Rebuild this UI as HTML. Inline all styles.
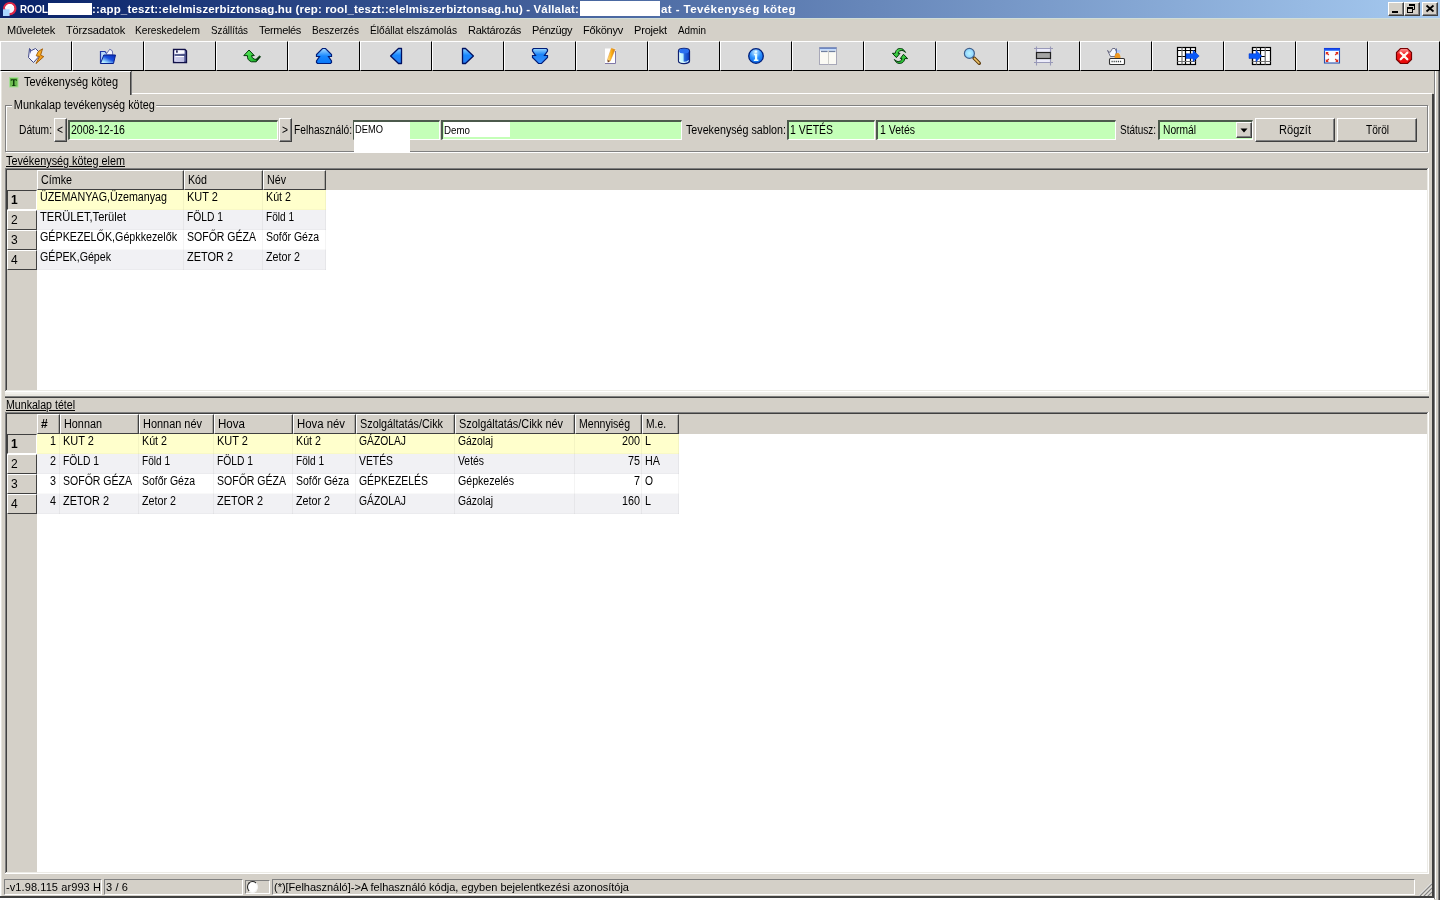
<!DOCTYPE html>
<html><head><meta charset="utf-8"><title>ROOL</title>
<style>
*{box-sizing:border-box;margin:0;padding:0}
html,body{width:1440px;height:900px;overflow:hidden;background:#d4d0c8;font-family:"Liberation Sans",sans-serif;font-size:11px;color:#000}
.a{position:absolute}
.t{position:absolute;white-space:nowrap;line-height:13px;font-size:12px}
#tx{position:absolute;left:0;top:0;width:1440px;height:900px;will-change:transform}
.tb{top:41px;height:30px;width:72px;background:#dadada;border-top:1px solid #fff;border-left:1px solid #fff;border-right:1px solid #000;border-bottom:1px solid #000}
.wb{background:#d4d0c8;border-top:1px solid #fff;border-left:1px solid #fff;border-right:1px solid #404040;border-bottom:1px solid #404040;box-shadow:inset -1px -1px 0 #808080}
.pb{background:#d4d0c8;border-top:1px solid #fff;border-left:1px solid #fff;border-right:1px solid #404040;border-bottom:1px solid #404040;box-shadow:inset -1px -1px 0 #808080}
.cbb{background:#d4d0c8;border-top:1px solid #fff;border-left:1px solid #fff;border-right:1px solid #404040;border-bottom:1px solid #404040;box-shadow:inset -1px -1px 0 #808080}
.inp{border-top:2px solid #404040;border-left:2px solid #404040;border-bottom:1px solid #fff;border-right:1px solid #fff;border-top-color:#4c5a4c;border-left-color:#4c5a4c}
.hdr{background:#d4d0c8;border-top:1px solid #fff;border-left:1px solid #fff;border-right:1px solid #404040;border-bottom:1px solid #404040;box-shadow:inset -1px 0 0 #a8a6a0}
.rh{background:#d4d0c8;border-top:1px solid #fff;border-left:1px solid #fff;border-right:1px solid #404040;border-bottom:1px solid #404040}
</style></head><body>
<div class="a" style="left:0px;top:0px;width:1440px;height:18px;background:linear-gradient(90deg,#0a246a 0%,#0a246a 2%,#a6caf0 100%);"></div>
<div class="a" style="left:0px;top:18px;width:1440px;height:1px;background:#d2ddd8;"></div>
<div class="a" style="left:0px;top:19px;width:1440px;height:1px;background:#d0d2c4;"></div>
<div class="a" style="left:48px;top:3px;width:44px;height:12px;background:#fff;"></div>
<div class="a" style="left:580px;top:1px;width:80px;height:15px;background:#fff;"></div>
<div class="a wb" style="left:1388px;top:2px;width:16px;height:14px"></div>
<div class="a wb" style="left:1404px;top:2px;width:16px;height:14px"></div>
<div class="a wb" style="left:1422px;top:2px;width:16px;height:14px"></div>
<div class="a tb" style="left:0px"></div>
<div class="a tb" style="left:72px"></div>
<div class="a tb" style="left:144px"></div>
<div class="a tb" style="left:216px"></div>
<div class="a tb" style="left:288px"></div>
<div class="a tb" style="left:360px"></div>
<div class="a tb" style="left:432px"></div>
<div class="a tb" style="left:504px"></div>
<div class="a tb" style="left:576px"></div>
<div class="a tb" style="left:648px"></div>
<div class="a tb" style="left:720px"></div>
<div class="a tb" style="left:792px"></div>
<div class="a tb" style="left:864px"></div>
<div class="a tb" style="left:936px"></div>
<div class="a tb" style="left:1008px"></div>
<div class="a tb" style="left:1080px"></div>
<div class="a tb" style="left:1152px"></div>
<div class="a tb" style="left:1224px"></div>
<div class="a tb" style="left:1296px"></div>
<div class="a tb" style="left:1368px"></div>
<div class="a" style="left:0px;top:71px;width:132px;height:24px;background:#d4d0c8;border-top:1px solid #fff;border-left:1px solid #fff;border-right:2px solid #404040"></div>
<div class="a" style="left:131px;top:72px;width:1px;height:23px;background:#808080;"></div>
<div class="a" style="left:132px;top:93px;width:1300px;height:1px;background:#fff;"></div>
<div class="a" style="left:1434px;top:71px;width:1px;height:828px;background:#808080;"></div>
<div class="a" style="left:1435px;top:71px;width:1px;height:828px;background:#fff;"></div>
<div class="a" style="left:1438px;top:71px;width:1px;height:829px;background:#808080;"></div>
<div class="a" style="left:1439px;top:71px;width:1px;height:829px;background:#404040;"></div>
<div class="a" style="left:1432px;top:94px;width:2px;height:804px;background:#404040;"></div>
<div class="a" style="left:0px;top:71px;width:1px;height:827px;background:#fff;"></div>
<div class="a" style="left:1px;top:72px;width:1px;height:826px;background:#e6e4de;"></div>
<div class="a" style="left:0px;top:896px;width:1434px;height:2px;background:#404040;"></div>
<div class="a" style="left:0px;top:898px;width:1434px;height:2px;background:#fff;"></div>
<div class="a" style="left:5px;top:105px;width:1423px;height:47px;border:1px solid #808080;box-shadow:inset 1px 1px 0 #fff,1px 1px 0 #fff"></div>
<div class="a pb" style="left:54px;top:118px;width:13px;height:24px"></div>
<div class="a pb" style="left:279px;top:118px;width:13px;height:24px"></div>
<div class="a inp" style="left:68px;top:120px;width:210px;height:20px;background:#c4ffb8"></div>
<div class="a inp" style="left:353px;top:120px;width:87px;height:20px;background:#c4ffb8"></div>
<div class="a inp" style="left:441px;top:120px;width:241px;height:20px;background:#c4ffb8"></div>
<div class="a inp" style="left:787px;top:120px;width:88px;height:20px;background:#c4ffb8"></div>
<div class="a inp" style="left:876px;top:120px;width:240px;height:20px;background:#c4ffb8"></div>
<div class="a inp" style="left:1158px;top:120px;width:95px;height:20px;background:#c4ffb8"></div>
<div class="a" style="left:354px;top:122px;width:56px;height:30px;background:#fff;"></div>
<div class="a" style="left:444px;top:122px;width:66px;height:15px;background:#fff;"></div>
<div class="a pb" style="left:1255px;top:118px;width:80px;height:24px"></div>
<div class="a pb" style="left:1337px;top:118px;width:80px;height:24px"></div>
<div class="a cbb" style="left:1236px;top:122px;width:16px;height:16px"></div>
<div class="a" style="left:5px;top:168px;width:1424px;height:224px;background:#fff;"></div>
<div class="a" style="left:5px;top:168px;width:1424px;height:1px;background:#808080;"></div>
<div class="a" style="left:5px;top:168px;width:1px;height:224px;background:#808080;"></div>
<div class="a" style="left:6px;top:169px;width:1422px;height:1px;background:#404040;"></div>
<div class="a" style="left:6px;top:169px;width:1px;height:222px;background:#404040;"></div>
<div class="a" style="left:6px;top:390px;width:1422px;height:1px;background:#ecebe6;"></div>
<div class="a" style="left:1427px;top:169px;width:1px;height:222px;background:#ecebe6;"></div>
<div class="a" style="left:5px;top:391px;width:1424px;height:1px;background:#fff;"></div>
<div class="a" style="left:1428px;top:168px;width:1px;height:224px;background:#fff;"></div>
<div class="a" style="left:7px;top:170px;width:1420px;height:20px;background:#d4d0c8;"></div>
<div class="a" style="left:7px;top:190px;width:30px;height:200px;background:#d4d0c8;"></div>
<div class="a hdr" style="left:37px;top:170px;width:147px;height:20px"></div>
<div class="a hdr" style="left:184px;top:170px;width:79px;height:20px"></div>
<div class="a hdr" style="left:263px;top:170px;width:63px;height:20px"></div>
<div class="a" style="left:37px;top:190px;width:289px;height:20px;background:#ffffcc;"></div>
<div class="a" style="left:7px;top:190px;width:30px;height:20px;border-top:1px solid #404040;border-left:1px solid #404040;border-bottom:1px solid #fff;border-right:1px solid #fff"></div>
<div class="a" style="left:183px;top:190px;width:1px;height:20px;background:rgba(0,0,0,0.045);"></div>
<div class="a" style="left:262px;top:190px;width:1px;height:20px;background:rgba(0,0,0,0.045);"></div>
<div class="a" style="left:325px;top:190px;width:1px;height:20px;background:rgba(0,0,0,0.045);"></div>
<div class="a" style="left:37px;top:209px;width:289px;height:1px;background:rgba(0,0,0,0.025);"></div>
<div class="a" style="left:37px;top:210px;width:289px;height:20px;background:#f1f1f4;"></div>
<div class="a rh" style="left:7px;top:210px;width:30px;height:20px"></div>
<div class="a" style="left:183px;top:210px;width:1px;height:20px;background:rgba(0,0,0,0.045);"></div>
<div class="a" style="left:262px;top:210px;width:1px;height:20px;background:rgba(0,0,0,0.045);"></div>
<div class="a" style="left:325px;top:210px;width:1px;height:20px;background:rgba(0,0,0,0.045);"></div>
<div class="a" style="left:37px;top:229px;width:289px;height:1px;background:rgba(0,0,0,0.025);"></div>
<div class="a" style="left:37px;top:230px;width:289px;height:20px;background:#fff;"></div>
<div class="a rh" style="left:7px;top:230px;width:30px;height:20px"></div>
<div class="a" style="left:183px;top:230px;width:1px;height:20px;background:rgba(0,0,0,0.045);"></div>
<div class="a" style="left:262px;top:230px;width:1px;height:20px;background:rgba(0,0,0,0.045);"></div>
<div class="a" style="left:325px;top:230px;width:1px;height:20px;background:rgba(0,0,0,0.045);"></div>
<div class="a" style="left:37px;top:249px;width:289px;height:1px;background:rgba(0,0,0,0.025);"></div>
<div class="a" style="left:37px;top:250px;width:289px;height:20px;background:#f1f1f4;"></div>
<div class="a rh" style="left:7px;top:250px;width:30px;height:20px"></div>
<div class="a" style="left:183px;top:250px;width:1px;height:20px;background:rgba(0,0,0,0.045);"></div>
<div class="a" style="left:262px;top:250px;width:1px;height:20px;background:rgba(0,0,0,0.045);"></div>
<div class="a" style="left:325px;top:250px;width:1px;height:20px;background:rgba(0,0,0,0.045);"></div>
<div class="a" style="left:37px;top:269px;width:289px;height:1px;background:rgba(0,0,0,0.025);"></div>
<div class="a" style="left:5px;top:412px;width:1424px;height:462px;background:#fff;"></div>
<div class="a" style="left:5px;top:412px;width:1424px;height:1px;background:#808080;"></div>
<div class="a" style="left:5px;top:412px;width:1px;height:462px;background:#808080;"></div>
<div class="a" style="left:6px;top:413px;width:1422px;height:1px;background:#404040;"></div>
<div class="a" style="left:6px;top:413px;width:1px;height:460px;background:#404040;"></div>
<div class="a" style="left:6px;top:872px;width:1422px;height:1px;background:#ecebe6;"></div>
<div class="a" style="left:1427px;top:413px;width:1px;height:460px;background:#ecebe6;"></div>
<div class="a" style="left:5px;top:873px;width:1424px;height:1px;background:#fff;"></div>
<div class="a" style="left:1428px;top:412px;width:1px;height:462px;background:#fff;"></div>
<div class="a" style="left:7px;top:414px;width:1420px;height:20px;background:#d4d0c8;"></div>
<div class="a" style="left:7px;top:434px;width:30px;height:438px;background:#d4d0c8;"></div>
<div class="a hdr" style="left:37px;top:414px;width:23px;height:20px"></div>
<div class="a hdr" style="left:60px;top:414px;width:79px;height:20px"></div>
<div class="a hdr" style="left:139px;top:414px;width:75px;height:20px"></div>
<div class="a hdr" style="left:214px;top:414px;width:79px;height:20px"></div>
<div class="a hdr" style="left:293px;top:414px;width:63px;height:20px"></div>
<div class="a hdr" style="left:356px;top:414px;width:99px;height:20px"></div>
<div class="a hdr" style="left:455px;top:414px;width:120px;height:20px"></div>
<div class="a hdr" style="left:575px;top:414px;width:67px;height:20px"></div>
<div class="a hdr" style="left:642px;top:414px;width:37px;height:20px"></div>
<div class="a" style="left:37px;top:434px;width:642px;height:20px;background:#ffffcc;"></div>
<div class="a" style="left:7px;top:434px;width:30px;height:20px;border-top:1px solid #404040;border-left:1px solid #404040;border-bottom:1px solid #fff;border-right:1px solid #fff"></div>
<div class="a" style="left:59px;top:434px;width:1px;height:20px;background:rgba(0,0,0,0.045);"></div>
<div class="a" style="left:138px;top:434px;width:1px;height:20px;background:rgba(0,0,0,0.045);"></div>
<div class="a" style="left:213px;top:434px;width:1px;height:20px;background:rgba(0,0,0,0.045);"></div>
<div class="a" style="left:292px;top:434px;width:1px;height:20px;background:rgba(0,0,0,0.045);"></div>
<div class="a" style="left:355px;top:434px;width:1px;height:20px;background:rgba(0,0,0,0.045);"></div>
<div class="a" style="left:454px;top:434px;width:1px;height:20px;background:rgba(0,0,0,0.045);"></div>
<div class="a" style="left:574px;top:434px;width:1px;height:20px;background:rgba(0,0,0,0.045);"></div>
<div class="a" style="left:641px;top:434px;width:1px;height:20px;background:rgba(0,0,0,0.045);"></div>
<div class="a" style="left:678px;top:434px;width:1px;height:20px;background:rgba(0,0,0,0.045);"></div>
<div class="a" style="left:37px;top:453px;width:642px;height:1px;background:rgba(0,0,0,0.025);"></div>
<div class="a" style="left:37px;top:454px;width:642px;height:20px;background:#f1f1f4;"></div>
<div class="a rh" style="left:7px;top:454px;width:30px;height:20px"></div>
<div class="a" style="left:59px;top:454px;width:1px;height:20px;background:rgba(0,0,0,0.045);"></div>
<div class="a" style="left:138px;top:454px;width:1px;height:20px;background:rgba(0,0,0,0.045);"></div>
<div class="a" style="left:213px;top:454px;width:1px;height:20px;background:rgba(0,0,0,0.045);"></div>
<div class="a" style="left:292px;top:454px;width:1px;height:20px;background:rgba(0,0,0,0.045);"></div>
<div class="a" style="left:355px;top:454px;width:1px;height:20px;background:rgba(0,0,0,0.045);"></div>
<div class="a" style="left:454px;top:454px;width:1px;height:20px;background:rgba(0,0,0,0.045);"></div>
<div class="a" style="left:574px;top:454px;width:1px;height:20px;background:rgba(0,0,0,0.045);"></div>
<div class="a" style="left:641px;top:454px;width:1px;height:20px;background:rgba(0,0,0,0.045);"></div>
<div class="a" style="left:678px;top:454px;width:1px;height:20px;background:rgba(0,0,0,0.045);"></div>
<div class="a" style="left:37px;top:473px;width:642px;height:1px;background:rgba(0,0,0,0.025);"></div>
<div class="a" style="left:37px;top:474px;width:642px;height:20px;background:#fff;"></div>
<div class="a rh" style="left:7px;top:474px;width:30px;height:20px"></div>
<div class="a" style="left:59px;top:474px;width:1px;height:20px;background:rgba(0,0,0,0.045);"></div>
<div class="a" style="left:138px;top:474px;width:1px;height:20px;background:rgba(0,0,0,0.045);"></div>
<div class="a" style="left:213px;top:474px;width:1px;height:20px;background:rgba(0,0,0,0.045);"></div>
<div class="a" style="left:292px;top:474px;width:1px;height:20px;background:rgba(0,0,0,0.045);"></div>
<div class="a" style="left:355px;top:474px;width:1px;height:20px;background:rgba(0,0,0,0.045);"></div>
<div class="a" style="left:454px;top:474px;width:1px;height:20px;background:rgba(0,0,0,0.045);"></div>
<div class="a" style="left:574px;top:474px;width:1px;height:20px;background:rgba(0,0,0,0.045);"></div>
<div class="a" style="left:641px;top:474px;width:1px;height:20px;background:rgba(0,0,0,0.045);"></div>
<div class="a" style="left:678px;top:474px;width:1px;height:20px;background:rgba(0,0,0,0.045);"></div>
<div class="a" style="left:37px;top:493px;width:642px;height:1px;background:rgba(0,0,0,0.025);"></div>
<div class="a" style="left:37px;top:494px;width:642px;height:20px;background:#f1f1f4;"></div>
<div class="a rh" style="left:7px;top:494px;width:30px;height:20px"></div>
<div class="a" style="left:59px;top:494px;width:1px;height:20px;background:rgba(0,0,0,0.045);"></div>
<div class="a" style="left:138px;top:494px;width:1px;height:20px;background:rgba(0,0,0,0.045);"></div>
<div class="a" style="left:213px;top:494px;width:1px;height:20px;background:rgba(0,0,0,0.045);"></div>
<div class="a" style="left:292px;top:494px;width:1px;height:20px;background:rgba(0,0,0,0.045);"></div>
<div class="a" style="left:355px;top:494px;width:1px;height:20px;background:rgba(0,0,0,0.045);"></div>
<div class="a" style="left:454px;top:494px;width:1px;height:20px;background:rgba(0,0,0,0.045);"></div>
<div class="a" style="left:574px;top:494px;width:1px;height:20px;background:rgba(0,0,0,0.045);"></div>
<div class="a" style="left:641px;top:494px;width:1px;height:20px;background:rgba(0,0,0,0.045);"></div>
<div class="a" style="left:678px;top:494px;width:1px;height:20px;background:rgba(0,0,0,0.045);"></div>
<div class="a" style="left:37px;top:513px;width:642px;height:1px;background:rgba(0,0,0,0.025);"></div>
<div class="a" style="left:5px;top:392px;width:1424px;height:2px;background:#f2f1ed;"></div>
<div class="a" style="left:5px;top:394px;width:1424px;height:2px;background:#eae8e2;"></div>
<div class="a" style="left:5px;top:396px;width:1424px;height:1px;background:#808080;"></div>
<div class="a" style="left:5px;top:397px;width:1424px;height:1px;background:#404040;"></div>
<div class="a" style="left:4px;top:879px;width:98px;height:16px;border-top:1px solid #808080;border-left:1px solid #808080;border-bottom:1px solid #fff;border-right:1px solid #fff"></div>
<div class="a" style="left:104px;top:879px;width:139px;height:16px;border-top:1px solid #808080;border-left:1px solid #808080;border-bottom:1px solid #fff;border-right:1px solid #fff"></div>
<div class="a" style="left:272px;top:879px;width:1143px;height:16px;border-top:1px solid #808080;border-left:1px solid #808080;border-bottom:1px solid #fff;border-right:1px solid #fff"></div>
<div class="a" style="left:245px;top:880px;width:25px;height:14px;border-top:1px solid #808080;border-left:1px solid #808080;border-bottom:1px solid #fff;border-right:1px solid #fff"></div>
<div class="a" style="left:247px;top:881px;width:11px;height:12px;border-radius:50%;background:#fff;border:1.5px solid #202020;border-right-color:#f4f4f4;border-bottom-color:#f4f4f4;transform:rotate(0deg)"></div>
<svg class="a" style="left:1419px;top:883px" width="13" height="13" viewBox="0 0 13 13"><g stroke-width="1"><path d="M0.5 13L13 0.5M4.5 13L13 4.5M8.5 13L13 8.5" stroke="#808080" stroke-width="1.6"/><path d="M-0.5 13L13 -0.5M3.5 13L13 3.5M7.5 13L13 7.5" stroke="#fff"/></g></svg>
<svg class="a" style="left:0;top:0" width="1440" height="72" viewBox="0 0 1440 72">
<defs>
<linearGradient id="gb" x1="0" y1="0" x2="0" y2="1"><stop offset="0" stop-color="#8fd0ff"/><stop offset=".45" stop-color="#1888ff"/><stop offset="1" stop-color="#2a7cf0"/></linearGradient>
<linearGradient id="gb2" x1="0" y1="0" x2="0" y2="1"><stop offset="0" stop-color="#a8dcff"/><stop offset=".5" stop-color="#1888ff"/><stop offset="1" stop-color="#0a78f8"/></linearGradient>
<linearGradient id="gbd" x1="0" y1="0" x2="0" y2="1"><stop offset="0" stop-color="#9cd8ff"/><stop offset=".4" stop-color="#1a84f8"/><stop offset="1" stop-color="#3a90ff"/></linearGradient>
<linearGradient id="gfold" x1="1" y1="0" x2="0.1" y2="1"><stop offset="0" stop-color="#0828b8"/><stop offset=".45" stop-color="#1850e0"/><stop offset=".8" stop-color="#a0e0ff"/><stop offset="1" stop-color="#e0ffff"/></linearGradient>
<linearGradient id="gfl" x1="0" y1="0" x2="1" y2="0"><stop offset="0" stop-color="#e8e8ff"/><stop offset=".5" stop-color="#c0c4e8"/><stop offset="1" stop-color="#4a5090"/></linearGradient>
<linearGradient id="gcyl" x1="0" y1="0" x2="1" y2="0"><stop offset="0" stop-color="#e8ffff"/><stop offset=".4" stop-color="#b8f0ff"/><stop offset=".55" stop-color="#2868d8"/><stop offset="1" stop-color="#0838c0"/></linearGradient>
<radialGradient id="ginfo" cx=".45" cy=".25" r=".8"><stop offset="0" stop-color="#c8ecff"/><stop offset=".5" stop-color="#2a90ff"/><stop offset="1" stop-color="#0860e0"/></radialGradient>
<linearGradient id="gred" x1="0" y1="0" x2="0" y2="1"><stop offset="0" stop-color="#ff9a9a"/><stop offset=".4" stop-color="#f01818"/><stop offset="1" stop-color="#e80808"/></linearGradient>
<linearGradient id="ggr" x1="0" y1="0" x2="1" y2="1"><stop offset="0" stop-color="#60f060"/><stop offset="1" stop-color="#10a820"/></linearGradient>
<linearGradient id="gpen" x1="0" y1="0" x2="1" y2="0"><stop offset="0" stop-color="#ffe8a0"/><stop offset=".5" stop-color="#ffb010"/><stop offset="1" stop-color="#c87820"/></linearGradient>
<linearGradient id="gbolt" x1="0" y1="0" x2="1" y2="1"><stop offset="0" stop-color="#ffc838"/><stop offset="1" stop-color="#e88008"/></linearGradient>
<radialGradient id="glens" cx=".5" cy=".5" r=".6"><stop offset="0" stop-color="#b8f4ff"/><stop offset="1" stop-color="#80c8ff"/></radialGradient>
<linearGradient id="gwin" x1="0" y1="0" x2="0" y2="1"><stop offset="0" stop-color="#0a30d8"/><stop offset="1" stop-color="#2a70ff"/></linearGradient>
</defs>
<!-- title icon -->
<circle cx="9.8" cy="8.6" r="5.6" fill="#f4f8ff" stroke="#e02848" stroke-width="2.2"/>
<rect x="3" y="9.3" width="6.6" height="6.7" fill="#a8d8ff"/>
<path d="M5.5 8.5a4.3 4.3 0 0 1 8 -1.5" fill="none" stroke="#fff" stroke-width="1.5"/>
<!-- 1 new/lightning -->
<path d="M29.5 48.5L31.5 50.5L35.5 48.5L38.5 51.5L38 57.5L33.5 62.5L28.5 57.5Z" fill="#f8f8ff" stroke="#404888" stroke-width="1"/>
<path d="M29.5 48.5L31.5 50.5L30 54Z" fill="#5058a0"/>
<path d="M42.5 48.8L38.3 51.5L36.2 55.8L39.6 56.4L36 63.6L43.8 56.6L40.6 55.2Z" fill="url(#gbolt)" stroke="#a05800" stroke-width=".9"/>
<!-- 2 open folder -->
<path d="M105.500 55L109.800 49.200L112.300 50.800L112.800 55Z" fill="#f4f4ff" stroke="#5058a0" stroke-width=".8"/>
<path d="M100.5 63.5V51.5H105L106.5 53.5" fill="#b8d8f8" stroke="#2038a8" stroke-width="1.2"/>
<path d="M100.500 63.500L103.800 55H115.500L113.500 63.500Z" fill="url(#gfold)" stroke="#08208c" stroke-width="1"/>
<!-- 3 floppy -->
<path d="M173.5 49.5H185L186.5 51V62.5H173.5Z" fill="url(#gfl)" stroke="#101048" stroke-width="1.3"/>
<rect x="175" y="50.3" width="9.5" height="3.4" fill="#fafaff"/>
<rect x="176" y="50.3" width="1.8" height="2.4" fill="#303060"/>
<rect x="174.5" y="54.2" width="11" height="1.6" fill="#40487c"/>
<rect x="175.5" y="56" width="8.5" height="1" fill="#fff"/>
<rect x="175.5" y="57" width="8.5" height="5" fill="#c8c8e8" opacity=".85"/>
<!-- 4 green undo arrow -->
<path d="M249 50L254.3 55.6H251.6C252 58 253.5 59.3 256 59.4L259.6 55.9L260.4 56.8L256.2 61.8H251.5C248.5 60.8 247.2 58.6 247.4 55.6H243.8Z" fill="url(#ggr)" stroke="#003808" stroke-width="1"/>
<path d="M256.300 60.400L260 56.600" stroke="#002004" stroke-width="1.100"/>
<!-- 5 double up -->
<path id="dbl" d="M322.5 48.5H325.5L331.5 54.5V56.5H328.5L331.5 61V62.5L330.5 63.5H317.5L316.5 62.5V61L319.5 56.5H316.5V54.5Z" fill="url(#gb2)" stroke="#001c78" stroke-width="1.2"/>
<!-- 6 left -->
<path d="M398.5 48.5H401.5V63.5H398.5L390.6 56Z" fill="url(#gb)" stroke="#001060" stroke-width="1.3" stroke-linejoin="round"/>
<!-- 7 right -->
<path d="M465.5 48.5H462.5V63.5H465.5L473.4 56Z" fill="url(#gb)" stroke="#001060" stroke-width="1.3" stroke-linejoin="round"/>
<!-- 8 double down -->
<path d="M538.5 63.5H541.5L547.5 57.5V55.5H544.5L547.5 51V49.5L546.5 48.5H533.5L532.5 49.5V51L535.5 55.5H532.5V57.5Z" fill="url(#gbd)" stroke="#001c78" stroke-width="1.2"/>
<!-- 9 edit -->
<rect x="605" y="48.5" width="10.5" height="15" fill="#fff"/>
<path d="M605 63.5H615.5V51" fill="none" stroke="#8078a8" stroke-width="1"/>
<path d="M611.3 48.3L615.2 49.4L610.2 61L607.4 60Z" fill="url(#gpen)" stroke="#d89030" stroke-width=".5"/>
<path d="M607.4 60L610.2 61L607.8 62.6Z" fill="#704018"/>
<!-- 10 cylinder -->
<path d="M678.5 51C678.5 47.6 689.5 47.6 689.5 51V61C689.5 64.4 678.5 64.4 678.5 61Z" fill="url(#gcyl)" stroke="#102070" stroke-width="1.2"/>
<ellipse cx="684" cy="51" rx="5" ry="2.5" fill="#2a70f0"/>
<path d="M679.3 60.5C681 63 687 63 688.7 60.5" fill="none" stroke="#e0ffff" stroke-width="1.3"/>
<!-- 11 info -->
<circle cx="756" cy="56" r="7.3" fill="url(#ginfo)" stroke="#00207c" stroke-width="1.3"/>
<path d="M754 53.8H757.2V59.6H758.4V61H753.8V59.6H755V55.2H754Z" fill="#e8ffff"/>
<circle cx="756" cy="51.6" r="1.2" fill="#e8f8ff"/>
<!-- 12 layout -->
<rect x="819.500" y="47.500" width="17" height="17" fill="#fbfaf4" stroke="#a8a8b8" stroke-width="1"/>
<rect x="819.500" y="47.300" width="17" height="1.700" fill="#7088c0"/>
<rect x="820" y="49" width="16" height="1.6" fill="#c4dcff"/>
<rect x="821" y="50.8" width="6.6" height="1.3" fill="#7080a0"/><rect x="829" y="50.800" width="6.400" height="1.300" fill="#7080a0"/>
<rect x="828" y="50.5" width=".9" height="14" fill="#c8c8c4"/>
<!-- 13 refresh -->
<path d="M905.6 52.4L903 49.2C899.5 47.6 896 48.6 895.2 53.3H892.4L896.4 57.6L900 53.3H898C898.4 51 900.4 50.2 903 50.6Z" fill="url(#ggr)" stroke="#003808" stroke-width="1"/>
<path d="M894.3 59.5L896.5 62.6C900 64.4 904 63.4 904.8 58.6H907.6L903.5 54.3L900.3 58.6H902C901.6 61 899.6 61.8 897 61.4Z" fill="url(#ggr)" stroke="#003808" stroke-width="1"/>
<!-- 14 magnifier -->
<path d="M974 58L979.3 63.3" stroke="#5a3808" stroke-width="3.4" stroke-linecap="round"/>
<path d="M974.4 58.4L979 63" stroke="#f0c468" stroke-width="1.5" stroke-linecap="round"/>
<circle cx="969.4" cy="53.4" r="5" fill="url(#glens)" stroke="#40608c" stroke-width="1.2"/>
<!-- 15 row -->
<rect x="1036.5" y="48.5" width="14" height="14" fill="#ececfa"/>
<path d="M1034 48.500H1053M1034 62.500H1053M1036.500 46.500V65.500M1050.500 46.500V65.500" stroke="#8c8cb0" stroke-width="1.100" fill="none" opacity=".85"/>
<rect x="1036.5" y="52.5" width="14" height="6" fill="#a4a4a4" stroke="#202020" stroke-width="1.2"/>
<!-- 16 password -->
<path d="M1107.5 50.5L1110 52.5L1112.5 48.5H1115L1116.5 52L1115 56.5H1110.5Z" fill="#f4f8ff" stroke="#50506c" stroke-width=".8"/>
<rect x="1117" y="50" width="3.4" height="2.6" fill="#b0c8f8"/>
<rect x="1116" y="48.5" width="1" height="6" fill="#6070a0"/>
<path d="M1114.5 58C1114.5 54.5 1116 53 1117.5 53C1119.500 53 1120.5 55 1120.5 58Z" fill="#f09820"/>
<rect x="1109.500" y="58.500" width="15" height="6" rx="1" fill="#fff" stroke="#303030" stroke-width="1.1"/>
<path d="M1111.5 61.5H1122" stroke="#404848" stroke-width="1.6" stroke-dasharray="1.2 .9"/>
<!-- 17 grid + arrow right -->
<g id="grd"><rect x="1177.500" y="47.500" width="18" height="17" fill="#fff" stroke="#000" stroke-width="1.2"/>
<path d="M1177.500 50.500H1195.500M1177.500 56.500H1186M1185.500 47.500V64.500M1190.500 47.500V64.500" stroke="#000" stroke-width="1.2" fill="none"/>
<path d="M1182 47.500V64.500M1177.500 61.500H1195.500" stroke="#707070" stroke-width="1.200" fill="none"/></g>
<path d="M1186 53.700H1193V50.300L1199.200 56L1193 61.700V58.500H1186Z" fill="#0858f8" stroke="#0030c0" stroke-width=".5"/>
<!-- 18 arrow + grid -->
<rect x="1252.500" y="47.500" width="18" height="17" fill="#fff" stroke="#000" stroke-width="1.2"/>
<path d="M1252.500 50.500H1270.500M1261 56.500H1265M1260.500 47.500V64.500M1252.500 47.500V64.500" stroke="#000" stroke-width="1.2" fill="none"/>
<path d="M1256.500 47.500V64.500M1265.200 47.500V64.500M1252.500 61.500H1270.500" stroke="#707070" stroke-width="1.2" fill="none"/>
<path d="M1249 53.700H1256V50.300L1261.700 56L1256 61.700V58.500H1249Z" fill="#0858f8" stroke="#0030c0" stroke-width=".5"/>
<!-- 19 fullscreen -->
<rect x="1324.500" y="48.500" width="15" height="14.500" fill="#fafcff" stroke="#2850b0" stroke-width="1.1"/>
<rect x="1324" y="48" width="16" height="2.800" fill="url(#gwin)"/>
<g fill="#e02818"><path d="M1325.800 52H1328.800L1325.800 55Z"/><path d="M1338.200 52H1335.200L1338.200 55Z"/><path d="M1325.800 62H1328.800L1325.800 59Z"/><path d="M1338.200 62H1335.200L1338.200 59Z"/>
<path d="M1326.500 52.700L1328.800 55M1337.500 52.700L1335.200 55M1326.500 61.300L1328.800 59M1337.500 61.300L1335.200 59" stroke="#e03020" stroke-width="1.300"/></g>
<!-- 20 stop -->
<path d="M1400.500 48.500H1407.500L1411.500 52.500V59.500L1407.500 63.500H1400.500L1396.500 59.500V52.500Z" fill="url(#gred)" stroke="#780000" stroke-width="1.200"/>
<path d="M1400.700 52.700L1407.300 59.300M1407.300 52.700L1400.700 59.300" stroke="#fff8f0" stroke-width="2.300" stroke-linecap="round"/>
<!-- window button glyphs -->
<rect x="1392" y="11" width="6" height="2" fill="#000"/>
<path d="M1409.500 5h5v4.500h-1.500M1409.500 5.500h5" stroke="#000" stroke-width="1" fill="none"/><rect x="1409" y="4" width="6" height="2" fill="#000"/>
<rect x="1407.500" y="8.500" width="5" height="4" fill="none" stroke="#000"/><rect x="1407" y="7" width="6" height="2" fill="#000"/>
<path d="M1426.500 5.500L1433.500 11.500M1433.500 5.500L1426.500 11.500" stroke="#000" stroke-width="1.800"/>
<!-- combobox arrow -->
</svg>
<svg class="a" style="left:1240px;top:128px" width="8" height="5" viewBox="0 0 8 5"><path d="M0.500 0.500H7.500L4 4.500Z" fill="#000"/></svg>
<svg class="a" style="left:9px;top:77px" width="10" height="11" viewBox="0 0 10 11"><rect width="9.500" height="10.500" fill="#a8dc98"/><rect x="1" y="1" width="7.500" height="8.500" fill="#6cbc50"/><path d="M1.800 2.200H7.700V4H7V3.200H5.500V8.300H6.500V9H3V8.300H4V3.200H2.500V4H1.800Z" fill="#0c3c08"/></svg>

<div id="tx">
<div class="t" style="left:20px;top:3px;transform:scaleX(0.8425);transform-origin:0 0;color:#fff;font-weight:bold;font-size:11.5px">ROOL</div>
<div class="t" style="left:92px;top:3px;letter-spacing:0.152px;color:#fff;font-weight:bold;font-size:11.5px">::app_teszt::elelmiszerbiztonsag.hu (rep: rool_teszt::elelmiszerbiztonsag.hu) - Vállalat:</div>
<div class="t" style="left:661px;top:3px;letter-spacing:0.423px;color:#fff;font-weight:bold;font-size:11.5px">at - Tevékenység köteg</div>
<div class="t" style="left:7px;top:24px;letter-spacing:-0.238px;font-size:11px">Műveletek</div>
<div class="t" style="left:66px;top:24px;letter-spacing:-0.139px;font-size:11px">Törzsadatok</div>
<div class="t" style="left:135px;top:24px;transform:scaleX(0.9242);transform-origin:0 0;font-size:11px">Kereskedelem</div>
<div class="t" style="left:211px;top:24px;transform:scaleX(0.8899);transform-origin:0 0;font-size:11px">Szállítás</div>
<div class="t" style="left:259px;top:24px;letter-spacing:-0.328px;font-size:11px">Termelés</div>
<div class="t" style="left:312px;top:24px;transform:scaleX(0.9151);transform-origin:0 0;font-size:11px">Beszerzés</div>
<div class="t" style="left:370px;top:24px;transform:scaleX(0.9240);transform-origin:0 0;font-size:11px">Élőállat elszámolás</div>
<div class="t" style="left:468px;top:24px;letter-spacing:-0.264px;font-size:11px">Raktározás</div>
<div class="t" style="left:532px;top:24px;letter-spacing:-0.402px;font-size:11px">Pénzügy</div>
<div class="t" style="left:583px;top:24px;letter-spacing:-0.225px;font-size:11px">Főkönyv</div>
<div class="t" style="left:634px;top:24px;letter-spacing:-0.179px;font-size:11px">Projekt</div>
<div class="t" style="left:678px;top:24px;transform:scaleX(0.8978);transform-origin:0 0;font-size:11px">Admin</div>
<div class="t" style="left:24px;top:76px;transform:scaleX(0.9150);transform-origin:0 0;">Tevékenység köteg</div>
<div class="t" style="left:14px;top:99px;transform:scaleX(0.9071);transform-origin:0 0;background:#d4d0c8;padding:0 2px;margin-left:-2px">Munkalap tevékenység köteg</div>
<div class="t" style="left:19px;top:124px;transform:scaleX(0.8530);transform-origin:0 0;">Dátum:</div>
<div class="t" style="left:71px;top:124px;transform:scaleX(0.8796);transform-origin:0 0;">2008-12-16</div>
<div class="t" style="left:294px;top:124px;transform:scaleX(0.8524);transform-origin:0 0;">Felhasználó:</div>
<div class="t" style="left:355px;top:123px;transform:scaleX(0.8485);transform-origin:0 0;font-size:11px">DEMO</div>
<div class="t" style="left:444px;top:124px;transform:scaleX(0.8860);transform-origin:0 0;font-size:11px">Demo</div>
<div class="t" style="left:686px;top:124px;transform:scaleX(0.8922);transform-origin:0 0;">Tevekenység sablon:</div>
<div class="t" style="left:790px;top:124px;transform:scaleX(0.8712);transform-origin:0 0;">1 VETÉS</div>
<div class="t" style="left:880px;top:124px;transform:scaleX(0.8743);transform-origin:0 0;">1 Vetés</div>
<div class="t" style="left:1120px;top:124px;transform:scaleX(0.8303);transform-origin:0 0;">Státusz:</div>
<div class="t" style="left:1163px;top:124px;transform:scaleX(0.8533);transform-origin:0 0;">Normál</div>
<div class="t" style="left:1279px;top:124px;transform:scaleX(0.9225);transform-origin:0 0;">Rögzít</div>
<div class="t" style="left:1366px;top:124px;transform:scaleX(0.8411);transform-origin:0 0;">Töröl</div>
<div class="t" style="left:57px;top:124px;transform:scaleX(0.8552);transform-origin:0 0;">&lt;</div>
<div class="t" style="left:282px;top:124px;transform:scaleX(0.8552);transform-origin:0 0;">&gt;</div>
<div class="t" style="left:6px;top:155px;transform:scaleX(0.9010);transform-origin:0 0;text-decoration:underline">Tevékenység köteg elem</div>
<div class="t" style="left:41px;top:174px;transform:scaleX(0.8941);transform-origin:0 0;">Címke</div>
<div class="t" style="left:188px;top:174px;transform:scaleX(0.8895);transform-origin:0 0;">Kód</div>
<div class="t" style="left:267px;top:174px;transform:scaleX(0.8902);transform-origin:0 0;">Név</div>
<div class="t" style="left:40px;top:191px;transform:scaleX(0.8913);transform-origin:0 0;">ÜZEMANYAG,Üzemanyag</div>
<div class="t" style="left:187px;top:191px;transform:scaleX(0.9172);transform-origin:0 0;">KUT 2</div>
<div class="t" style="left:266px;top:191px;transform:scaleX(0.8919);transform-origin:0 0;">Kút 2</div>
<div class="t" style="left:11px;top:194px;letter-spacing:0.312px;font-weight:bold">1</div>
<div class="t" style="left:40px;top:211px;transform:scaleX(0.9277);transform-origin:0 0;">TERÜLET,Terület</div>
<div class="t" style="left:187px;top:211px;transform:scaleX(0.8568);transform-origin:0 0;">FÖLD 1</div>
<div class="t" style="left:266px;top:211px;transform:scaleX(0.8393);transform-origin:0 0;">Föld 1</div>
<div class="t" style="left:11px;top:214px;letter-spacing:0.312px;">2</div>
<div class="t" style="left:40px;top:231px;transform:scaleX(0.8931);transform-origin:0 0;">GÉPKEZELŐK,Gépkkezelők</div>
<div class="t" style="left:187px;top:231px;transform:scaleX(0.8769);transform-origin:0 0;">SOFŐR GÉZA</div>
<div class="t" style="left:266px;top:231px;transform:scaleX(0.8731);transform-origin:0 0;">Sofőr Géza</div>
<div class="t" style="left:11px;top:234px;letter-spacing:0.312px;">3</div>
<div class="t" style="left:40px;top:251px;transform:scaleX(0.8870);transform-origin:0 0;">GÉPEK,Gépek</div>
<div class="t" style="left:187px;top:251px;transform:scaleX(0.9115);transform-origin:0 0;">ZETOR 2</div>
<div class="t" style="left:266px;top:251px;transform:scaleX(0.8944);transform-origin:0 0;">Zetor 2</div>
<div class="t" style="left:11px;top:254px;letter-spacing:0.312px;">4</div>
<div class="t" style="left:6px;top:399px;transform:scaleX(0.8841);transform-origin:0 0;text-decoration:underline">Munkalap tétel</div>
<div class="t" style="left:41px;top:418px;letter-spacing:0.312px;font-weight:bold">#</div>
<div class="t" style="left:64px;top:418px;transform:scaleX(0.9038);transform-origin:0 0;">Honnan</div>
<div class="t" style="left:143px;top:418px;transform:scaleX(0.9116);transform-origin:0 0;">Honnan név</div>
<div class="t" style="left:218px;top:418px;transform:scaleX(0.9637);transform-origin:0 0;">Hova</div>
<div class="t" style="left:297px;top:418px;transform:scaleX(0.9467);transform-origin:0 0;">Hova név</div>
<div class="t" style="left:360px;top:418px;transform:scaleX(0.9017);transform-origin:0 0;">Szolgáltatás/Cikk</div>
<div class="t" style="left:459px;top:418px;transform:scaleX(0.9064);transform-origin:0 0;">Szolgáltatás/Cikk név</div>
<div class="t" style="left:579px;top:418px;transform:scaleX(0.8788);transform-origin:0 0;">Mennyiség</div>
<div class="t" style="left:646px;top:418px;transform:scaleX(0.8568);transform-origin:0 0;">M.e.</div>
<div class="t" style="left:50px;top:435px;transform:scaleX(0.8972);transform-origin:0 0;">1</div>
<div class="t" style="left:63px;top:435px;transform:scaleX(0.9172);transform-origin:0 0;">KUT 2</div>
<div class="t" style="left:142px;top:435px;transform:scaleX(0.8919);transform-origin:0 0;">Kút 2</div>
<div class="t" style="left:217px;top:435px;transform:scaleX(0.9172);transform-origin:0 0;">KUT 2</div>
<div class="t" style="left:296px;top:435px;transform:scaleX(0.8919);transform-origin:0 0;">Kút 2</div>
<div class="t" style="left:359px;top:435px;transform:scaleX(0.8594);transform-origin:0 0;">GÁZOLAJ</div>
<div class="t" style="left:458px;top:435px;transform:scaleX(0.8602);transform-origin:0 0;">Gázolaj</div>
<div class="t" style="left:622px;top:435px;transform:scaleX(0.8986);transform-origin:0 0;">200</div>
<div class="t" style="left:645px;top:435px;transform:scaleX(0.8972);transform-origin:0 0;">L</div>
<div class="t" style="left:11px;top:438px;letter-spacing:0.312px;font-weight:bold">1</div>
<div class="t" style="left:50px;top:455px;transform:scaleX(0.8972);transform-origin:0 0;">2</div>
<div class="t" style="left:63px;top:455px;transform:scaleX(0.8568);transform-origin:0 0;">FÖLD 1</div>
<div class="t" style="left:142px;top:455px;transform:scaleX(0.8393);transform-origin:0 0;">Föld 1</div>
<div class="t" style="left:217px;top:455px;transform:scaleX(0.8568);transform-origin:0 0;">FÖLD 1</div>
<div class="t" style="left:296px;top:455px;transform:scaleX(0.8393);transform-origin:0 0;">Föld 1</div>
<div class="t" style="left:359px;top:455px;transform:scaleX(0.8638);transform-origin:0 0;">VETÉS</div>
<div class="t" style="left:458px;top:455px;transform:scaleX(0.8658);transform-origin:0 0;">Vetés</div>
<div class="t" style="left:628px;top:455px;transform:scaleX(0.8982);transform-origin:0 0;">75</div>
<div class="t" style="left:645px;top:455px;transform:scaleX(0.8997);transform-origin:0 0;">HA</div>
<div class="t" style="left:11px;top:458px;letter-spacing:0.312px;">2</div>
<div class="t" style="left:50px;top:475px;transform:scaleX(0.8972);transform-origin:0 0;">3</div>
<div class="t" style="left:63px;top:475px;transform:scaleX(0.8769);transform-origin:0 0;">SOFŐR GÉZA</div>
<div class="t" style="left:142px;top:475px;transform:scaleX(0.8731);transform-origin:0 0;">Sofőr Géza</div>
<div class="t" style="left:217px;top:475px;transform:scaleX(0.8769);transform-origin:0 0;">SOFŐR GÉZA</div>
<div class="t" style="left:296px;top:475px;transform:scaleX(0.8731);transform-origin:0 0;">Sofőr Géza</div>
<div class="t" style="left:359px;top:475px;transform:scaleX(0.8693);transform-origin:0 0;">GÉPKEZELÉS</div>
<div class="t" style="left:458px;top:475px;transform:scaleX(0.8836);transform-origin:0 0;">Gépkezelés</div>
<div class="t" style="left:634px;top:475px;transform:scaleX(0.8972);transform-origin:0 0;">7</div>
<div class="t" style="left:645px;top:475px;transform:scaleX(0.8562);transform-origin:0 0;">O</div>
<div class="t" style="left:11px;top:478px;letter-spacing:0.312px;">3</div>
<div class="t" style="left:50px;top:495px;transform:scaleX(0.8972);transform-origin:0 0;">4</div>
<div class="t" style="left:63px;top:495px;transform:scaleX(0.9115);transform-origin:0 0;">ZETOR 2</div>
<div class="t" style="left:142px;top:495px;transform:scaleX(0.8944);transform-origin:0 0;">Zetor 2</div>
<div class="t" style="left:217px;top:495px;transform:scaleX(0.9115);transform-origin:0 0;">ZETOR 2</div>
<div class="t" style="left:296px;top:495px;transform:scaleX(0.8944);transform-origin:0 0;">Zetor 2</div>
<div class="t" style="left:359px;top:495px;transform:scaleX(0.8594);transform-origin:0 0;">GÁZOLAJ</div>
<div class="t" style="left:458px;top:495px;transform:scaleX(0.8602);transform-origin:0 0;">Gázolaj</div>
<div class="t" style="left:622px;top:495px;transform:scaleX(0.8986);transform-origin:0 0;">160</div>
<div class="t" style="left:645px;top:495px;transform:scaleX(0.8972);transform-origin:0 0;">L</div>
<div class="t" style="left:11px;top:498px;letter-spacing:0.312px;">4</div>
<div class="t" style="left:6px;top:881px;letter-spacing:0.091px;font-size:11px">-v1.98.115 ar993 H</div>
<div class="t" style="left:106px;top:881px;letter-spacing:0.119px;font-size:11px">3 / 6</div>
<div class="t" style="left:274px;top:881px;letter-spacing:-0.017px;font-size:11px">(*)[Felhasználó]->A felhasználó kódja, egyben bejelentkezési azonosítója</div>
</div>
</body></html>
